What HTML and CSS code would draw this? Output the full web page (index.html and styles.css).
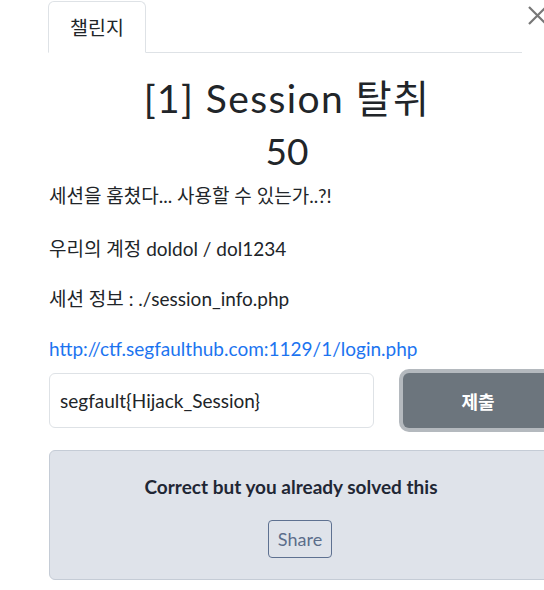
FILE: index.html
```
<!DOCTYPE html>
<html lang="ko">
<head>
  <meta charset="UTF-8" />
  <meta name="viewport" content="width=device-width, initial-scale=1.0" />
  <title>챌린지</title>
  <link rel="stylesheet" href="styles.css">
</head>
<body>
  <button class="close-btn" aria-label="닫기">
    <svg width="20" height="20" viewBox="0 0 20 20">
      <path d="M2 2 L19 19 M19 2 L2 19" stroke="#777" stroke-width="2.2" fill="none" />
    </svg>
  </button>

  <div class="modal-body">
    <ul class="nav-tabs">
      <li class="nav-item active">챌린지</li>
    </ul>

    <div class="tab-content">
      <h2 class="challenge-name">[1] Session 탈취</h2>
      <h3 class="challenge-value">50</h3>

      <div class="challenge-desc">
        <p>세션을 훔쳤다... 사용할 수 있는가..?!</p>
        <p>우리의 계정 doldol / dol1234</p>
        <p>세션 정보 : ./session_info.php</p>
        <p><a href="#">http://ctf.segfaulthub.com:1129/1/login.php</a></p>
      </div>

      <div class="submit-row">
        <input type="text" class="challenge-input" value="segfault{Hijack_Session}" />
        <button class="submit-btn">제출</button>
      </div>

      <div class="notification">
        <strong>Correct but you already solved this</strong>
        <button class="share-btn">Share</button>
      </div>
    </div>
  </div>
</body>
</html>
```

FILE: styles.css
```
body {
  font-family: Lato, "Noto Sans CJK KR", sans-serif;
  color: #212529;
  background: #fff;
  margin: 0;
  padding: 0;
  overflow: hidden;
}

.close-btn {
  position: absolute;
  top: 5px;
  right: -3px;
  border: none;
  background: none;
  padding: 0;
  cursor: pointer;
}

.close-btn svg {
  display: block;
}

.modal-body {
  width: 476px;
  padding-left: 49px;
  padding-top: 1px;
}

.nav-tabs {
  list-style: none;
  margin: 0 3px 0 -1px;
  padding: 0;
  display: flex;
  border-bottom: 1px solid #dee2e6;
}

.nav-item {
  font-size: 19.5px;
  line-height: 27px;
  padding: 12px 21px 11px;
  border: 1px solid transparent;
  border-radius: 6px 6px 0 0;
  margin-bottom: -1px;
}

.nav-item.active {
  border-color: #dee2e6 #dee2e6 #fff;
  background: #fff;
}

.challenge-name {
  text-align: center;
  font-size: 39px;
  font-weight: 400;
  letter-spacing: 1.4px;
  line-height: 1.2;
  margin: 22px 0 0;
}

.challenge-value {
  text-align: center;
  font-size: 37px;
  font-weight: 400;
  line-height: 1.2;
  margin: 7px 0 10px;
}

.challenge-desc p {
  font-size: 19px;
  line-height: 26px;
  margin: 0 0 24px;
}

.challenge-desc p:first-child {
  margin-bottom: 27px;
}

.challenge-desc p:last-child {
  margin-bottom: 11px;
}

.challenge-desc a {
  color: #1c74f0;
  text-decoration: none;
}

.submit-row {
  display: flex;
  gap: 29px;
  margin-right: -80px;
}

.challenge-input {
  width: 325px;
  height: 55px;
  box-sizing: border-box;
  border: 1px solid #dee2e6;
  border-radius: 6px;
  padding: 0 10px;
  font-family: Lato, "Noto Sans CJK KR", sans-serif;
  font-size: 19px;
  color: #212529;
}

.submit-btn {
  width: 150px;
  height: 55px;
  border: none;
  border-radius: 6px;
  background: #6c757d;
  color: #fff;
  font-family: Lato, "Noto Sans CJK KR", sans-serif;
  font-size: 18px;
  font-weight: 700;
  box-shadow: 0 0 0 4px #b4b9be;
}

.notification {
  margin-top: 22px;
  margin-right: -60px;
  padding: 22px 52px 20px 0;
  background: #dfe3ea;
  border: 1px solid #c5ccd6;
  border-radius: 6px;
  display: flex;
  flex-direction: column;
  align-items: center;
  gap: 19px;
  height: 86px;
}

.notification strong {
  font-size: 19px;
  line-height: 28px;
  color: #1f2735;
}

.share-btn {
  margin-left: 18px;
  font-family: Lato, sans-serif;
  font-size: 18px;
  color: #5b6d8a;
  background: transparent;
  border: 1px solid #5e7191;
  border-radius: 4px;
  padding: 7px 9px;
}
```
